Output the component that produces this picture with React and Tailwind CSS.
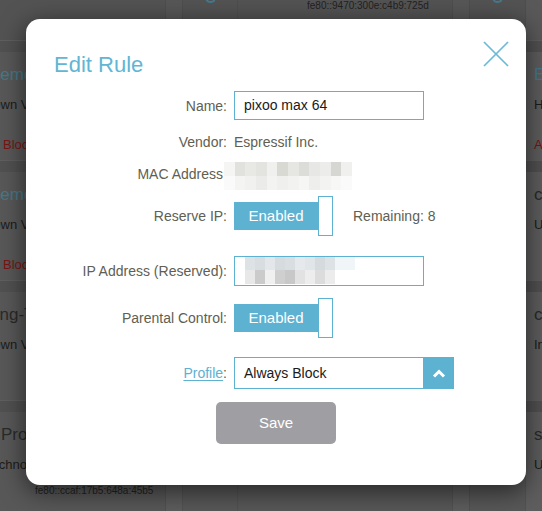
import React from "react";

// pixel cells of the blurred values (MAC and IP)
const macTop = ["#f5f5f4", "#e1e1dd", "#e8e8e4", "#e3e3df", "#f0f0ee", "#d9d9d4", "#e6e6e2", "#dcdcd8", "#e7e7e5", "#ececea", "#d6d6d2", "#f0f0ef"];
const macBottom = ["#fafafa", "#f4f4f3", "#f1f1f0", "#ebebea", "#f3f3f2", "#efefee", "#f2f2f1", "#f6f6f5", "#eeeeed", "#f3f3f2", "#f7f7f6", "#fafafa"];
const ipTop = ["#dde2e5", "#d8dde0", "#e3e7ea", "#d6dbde", "#d9dee1", "#e5e9ec", "#e0e5e8", "#d5dadd", "#dde2e5", "#f0f5f8", "#f0f5f8"];
const ipBottom = ["#e8e8e8", "#cbcbcb", "#f0f0f0", "#cfcfcf", "#c8c8c8", "#e2e2e2", "#ededed", "#dcdcdc", "#ececec"];

const bgRows = [
  { name: "Demo Device 1", nameCls: "-ml-[12px] text-[#46788b]", vendor: "Unknown Vendor", vendorCls: "-ml-[37px]", status: "Block", right: ["E", "H", "A"] },
  { name: "Demo Device 2", nameCls: "-ml-[12px] text-[#46788b]", vendor: "Unknown Vendor", vendorCls: "-ml-[37px]", status: "Block", right: ["c", "U", ""] },
  { name: "Living-TV", nameCls: "-ml-[26px] text-[#2a2a2a]", vendor: "Unknown Vendor", vendorCls: "-ml-[37px]", status: "", right: ["c", "In", ""] },
  { name: "Pro", nameCls: "ml-[1px] text-[#2a2a2a]", vendor: "Technology", vendorCls: "-ml-[15px]", status: "", right: ["s", "U", ""] },
];

const Label = ({ children, w = "w-[201px]" }) => (
  <div className={`${w} shrink-0 text-right text-[14px] leading-[16px] text-[#606052]`}>
    {children}
  </div>
);

const Toggle = () => (
  <div className="ml-[7px] flex items-center">
    <div className="flex h-[28px] w-[84px] items-center justify-center bg-[#5db1d1] text-[15px] text-white">
      Enabled
    </div>
    <div className="h-[40px] w-[15px] border border-[#5db1d1] bg-white" />
  </div>
);

const BgRow = ({ row, last }) => (
  <div className="flex h-[108px]">
    <div className="w-[166px] shrink-0 border-r border-[#515151] pt-[13px]">
      <div className="w-[26px] overflow-hidden">
        <div className={`h-[20px] whitespace-nowrap text-[17px] leading-[20px] ${row.nameCls}`}>{row.name}</div>
        <div className={`mt-[10px] h-[20px] whitespace-nowrap text-[13px] leading-[20px] text-[#1c1c1c] ${row.vendorCls}`}>{row.vendor}</div>
        {row.status && (
          <div className="mt-[20px] h-[20px] whitespace-nowrap pl-[3px] text-[13px] leading-[20px] text-[#7a1414]">{row.status}</div>
        )}
      </div>
      {last && (
        <div className="mt-[10px] whitespace-nowrap pl-[35px] text-[10px] leading-[12px] text-[#222]">fe80::ccaf:17b5:648a:45b5</div>
      )}
    </div>
    <div className="w-[17px] shrink-0 border-r border-[#525252] bg-[#5d5d5d]" />
    <div className="w-[55px] shrink-0 border-r border-[#525252]" />
    <div className="w-[215px] shrink-0 border-r border-[#525252]" />
    <div className="w-[17px] shrink-0 border-r border-[#525252] bg-[#5d5d5d]" />
    <div className="w-[56px] shrink-0 border-r border-[#525252]" />
    <div className="flex-1 overflow-hidden bg-[#5e5e5e] pl-[8px] pt-[13px]">
      <div className={`h-[20px] text-[17px] leading-[20px] ${row.right[0] === "E" ? "text-[#46788b]" : "text-[#2a2a2a]"}`}>{row.right[0]}</div>
      <div className="mt-[10px] h-[20px] text-[13px] leading-[20px] text-[#1c1c1c]">{row.right[1]}</div>
      {row.right[2] && (
        <div className="mt-[20px] h-[20px] text-[13px] leading-[20px] text-[#7a1414]">{row.right[2]}</div>
      )}
    </div>
  </div>
);

export default function App() {
  return (
    <div className="relative h-[511px] w-[542px] overflow-hidden bg-[#585858] font-['Liberation_Sans',Arial,sans-serif]">
      {/* dimmed device table behind the dialog */}
      <div className="flex flex-col">
        <div className="flex h-[40px] bg-[#535353]">
          <div className="w-[166px] shrink-0 border-r border-[#4e4e4e]" />
          <div className="w-[17px] shrink-0 border-r border-[#4e4e4e] bg-[#575757]" />
          <div className="flex w-[55px] shrink-0 justify-center border-r border-[#4e4e4e]">
            <div className="mt-[-6px] h-[9px] w-[11px] rounded-b-full border-2 border-t-0 border-[#46788b]" />
          </div>
          <div className="w-[215px] shrink-0 border-r border-[#4e4e4e] pl-[69px] pt-[1px] text-[10px] leading-[10px] text-[#222]">
            fe80::9470:300e:c4b9:725d
          </div>
          <div className="w-[17px] shrink-0 border-r border-[#4e4e4e] bg-[#575757]" />
          <div className="flex w-[56px] shrink-0 justify-center border-r border-[#4e4e4e]">
            <div className="mt-[-6px] h-[9px] w-[11px] rounded-b-full border-2 border-t-0 border-[#46788b]" />
          </div>
          <div className="flex-1 bg-[#595959]" />
        </div>
        {bgRows.map((row, i) => (
          <React.Fragment key={i}>
            <div className="h-[12px] border-t border-[#5f5f5f] bg-[#515151]" />
            <BgRow row={row} last={i === bgRows.length - 1} />
          </React.Fragment>
        ))}
      </div>

      {/* overlay + dialog */}
      <div className="absolute inset-0 pl-[26px] pt-[19px]">
        <div className="relative h-[466px] w-[500px] rounded-[14px] bg-white shadow-[0_6px_26px_rgba(0,0,0,0.6)]">
          <button className="absolute right-[17px] top-[22px]">
            <svg width="26" height="26" viewBox="0 0 26 26">
              <line x1="1" y1="1" x2="25" y2="25" stroke="#6bbad6" strokeWidth="1.7" />
              <line x1="25" y1="1" x2="1" y2="25" stroke="#6bbad6" strokeWidth="1.7" />
            </svg>
          </button>

          <h2 className="w-fit pl-[28px] pt-[35px] text-[22px] leading-[22px] text-[#62b5d4]">Edit Rule</h2>

          <div className="mt-[15px] flex flex-col">
            {/* name */}
            <div className="flex h-[29px] items-center">
              <Label>Name:</Label>
              <div className="ml-[7px] flex h-[29px] w-[190px] items-center border border-[#5db1d1] pl-[9px] text-[14px] text-[#1a1a1a]">
                pixoo max 64
              </div>
            </div>

            {/* vendor */}
            <div className="mt-[12px] flex h-[20px] items-center">
              <Label>Vendor:</Label>
              <div className="ml-[7px] text-[14px] leading-[16px] text-[#606052]">Espressif Inc.</div>
            </div>

            {/* mac */}
            <div className="mt-[10px] flex h-[28px] items-center">
              <Label w="w-[197px] mb-[5px]">MAC Address</Label>
              <div className="ml-[1px] flex w-[128px] flex-col">
                <div className="grid h-[14px] grid-cols-12">
                  {macTop.map((c, i) => (
                    <div key={i} style={{ backgroundColor: c }} />
                  ))}
                </div>
                <div className="grid h-[14px] grid-cols-12">
                  {macBottom.map((c, i) => (
                    <div key={i} style={{ backgroundColor: c }} />
                  ))}
                </div>
              </div>
            </div>

            {/* reserve ip */}
            <div className="mt-[6px] flex h-[40px] items-center">
              <Label>Reserve IP:</Label>
              <Toggle />
              <div className="ml-[20px] text-[14px] leading-[16px] text-[#606052]">Remaining: 8</div>
            </div>

            {/* ip address */}
            <div className="mt-[20px] flex h-[30px] items-center">
              <Label>IP Address (Reserved):</Label>
              <div className="ml-[7px] flex h-[30px] w-[190px] flex-col border border-[#5db1d1] pl-[10px]">
                <div className="flex h-[13px]">
                  {ipTop.map((c, i) => (
                    <div key={i} className="w-[10px]" style={{ backgroundColor: c }} />
                  ))}
                </div>
                <div className="flex h-[14px]">
                  {ipBottom.map((c, i) => (
                    <div key={i} className="w-[10px]" style={{ backgroundColor: c }} />
                  ))}
                </div>
              </div>
            </div>

            {/* parental control */}
            <div className="mt-[12px] flex h-[40px] items-center">
              <Label>Parental Control:</Label>
              <Toggle />
            </div>

            {/* profile */}
            <div className="mt-[19px] flex h-[32px] items-center">
              <Label>
                <a className="text-[#5db1d1] underline underline-offset-2">Profile</a>:
              </Label>
              <div className="ml-[7px] flex h-[32px]">
                <div className="flex w-[190px] items-center border border-[#5db1d1] pl-[9px] text-[14px] text-[#1a1a1a]">
                  Always Block
                </div>
                <div className="flex w-[30px] items-center justify-center bg-[#5db1d1]">
                  <svg width="14" height="9" viewBox="0 0 14 9">
                    <polyline points="2,7.5 7,2.5 12,7.5" fill="none" stroke="white" strokeWidth="3" />
                  </svg>
                </div>
              </div>
            </div>

            <button className="mx-auto mt-[13px] h-[42px] w-[120px] rounded-[5px] bg-[#9e9ea3] text-[15px] text-white">
              Save
            </button>
          </div>
        </div>
      </div>
    </div>
  );
}
